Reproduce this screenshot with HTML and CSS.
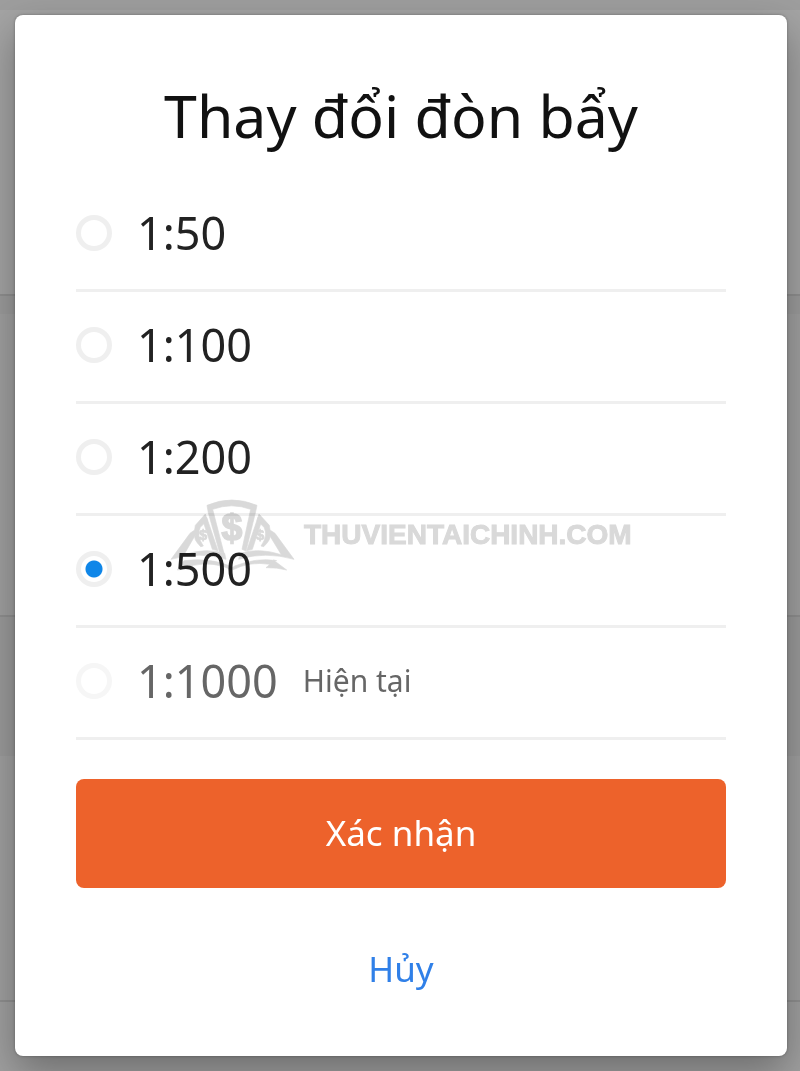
FILE: index.html
```
<!DOCTYPE html>
<html lang="vi">
<head>
    <meta charset="UTF-8">
    <meta name="viewport" content="width=device-width, initial-scale=1.0">
    <title>Thay đổi đòn bẩy</title>
    <link rel="stylesheet" href="styles.css">
</head>
<body>
<div class="backdrop">
    <div class="band band-top"></div>
    <div class="band band-head"></div>
    <div class="band band-line"></div>
    <div class="band band-gap"></div>
    <div class="band band-panel"></div>
    <div class="band band-line"></div>
    <div class="band band-middle"></div>
    <div class="band band-body"></div>
    <div class="band band-line"></div>
    <div class="band band-foot"></div>
</div>
<form class="modal">
    <h1>Thay đổi đòn bẩy</h1>
    <div class="options">
        <label class="option">
            <input type="radio" name="leverage" value="50">
            <span>1:50</span>
        </label>
        <label class="option">
            <input type="radio" name="leverage" value="100">
            <span>1:100</span>
        </label>
        <label class="option">
            <input type="radio" name="leverage" value="200">
            <span>1:200</span>
        </label>
        <label class="option">
            <input type="radio" name="leverage" value="500" checked>
            <span>1:500</span>
        </label>
        <label class="option current">
            <input type="radio" name="leverage" value="1000" disabled>
            <span>1:1000</span>
            <small>Hiện tại</small>
        </label>
        <div class="watermark">
            <svg viewBox="30 27 375 216" width="125" height="72" aria-hidden="true">
                <!-- middle note -->
                <path d="M141 46Q215 14 291 46L286 69L258 183L246 178L272 58Q215 37 158 58L192 190L178 185L145 69Z"/>
                <!-- side notes -->
                <path d="M136 72L142 91L121 112Q108 136 130 168L122 170Q98 146 106 135L72 194Q140 172 194 190L198 208Q120 183 33 208L90 130L104 120L106 106Z"/>
                <path d="M297 72L291 91L312 112Q325 136 303 168L311 170Q336 146 328 135L364 194Q295 172 240 190L236 208Q315 183 402 208L345 130L330 120L328 106Z"/>
                <path d="M140 82L174 182L157 178L130 96Z"/>
                <path d="M294 82L260 182L277 178L304 96Z"/>
                <!-- open book -->
                <path d="M72 212Q150 202 210 228L217 233L224 228Q290 202 350 212L340 210L380 240Q350 232 318 233L330 223Q270 213 217 240Q160 213 100 226L85 235L52 240Z"/>
                <text class="sign big" x="216" y="151">$</text>
                <text class="sign" x="129" y="150">$</text>
                <text class="sign" x="300" y="150">$</text>
            </svg>
            <span>THUVIENTAICHINH.COM</span>
        </div>
    </div>
    <button type="submit" class="confirm">Xác nhận</button>
    <button type="button" class="cancel">Hủy</button>
</form>
</body>
</html>
```

FILE: styles.css
```
* {
    box-sizing: border-box;
}
body {
    display: grid;
    min-height: 100vh;
    margin: 0;
    overflow: hidden;
    font-family: "Noto Sans", "Open Sans", sans-serif;
}
.backdrop, .modal {
    grid-area: 1 / 1;
}
.backdrop {
    display: flex;
    flex-direction: column;
    background-color: #a0a0a0;
}
.band-top {
    flex: 10;
    background-color: #9e9e9e;
}
.band-head {
    flex: 284;
    background-color: #a4a4a4;
}
.band-line {
    height: 2px;
    background-color: #909090;
}
.band-gap {
    flex: 18;
    background-color: #9c9c9c;
}
.band-panel {
    flex: 300;
}
.band-middle {
    flex: 139;
    background-color: #9b9b9b;
}
.band-body {
    flex: 244;
}
.band-foot {
    flex: 70;
}
.modal {
    margin: 15px 13px 16px 15px;
    padding: 58px 61px 56px;
    border-radius: 8px;
    background-color: #fff;
    box-shadow: 0 16px 40px rgba(0, 0, 0, 0.32), 0 0 3px rgba(0, 0, 0, 0.3);
}
h1 {
    margin: 0 0 22px;
    font-size: 59px;
    font-weight: 400;
    line-height: 85px;
    text-align: center;
    color: #111;
}
.options {
    position: relative;
}
.option {
    display: flex;
    align-items: center;
    height: 112px;
    padding-bottom: 4px;
    border-bottom: 3px solid #efefef;
    font-size: 45px;
    color: #222;
}
.option input {
    appearance: none;
    width: 36px;
    height: 36px;
    margin: 0 25px 0 0;
    border: 5px solid #efefef;
    border-radius: 50%;
}
.option input:checked {
    background: radial-gradient(circle, #0f86e8 8px, #fff 9px);
}
.option small {
    margin-left: 25px;
    font-size: 30px;
}
.current {
    color: #666;
}
.current input {
    border-color: #f6f6f6;
}
.watermark {
    position: absolute;
    top: 319px;
    left: 94px;
    display: flex;
    align-items: center;
    gap: 9px;
    color: #d9d9d9;
    font-family: "Liberation Sans", sans-serif;
    font-size: 28px;
    font-weight: 700;
    -webkit-text-stroke: 1px #d9d9d9;
    mix-blend-mode: multiply;
    pointer-events: none;
}
.watermark svg {
    fill: currentColor;
    stroke: currentColor;
    stroke-width: 2px;
}
.sign {
    font-size: 44px;
    text-anchor: middle;
}
.sign.big {
    font-size: 112px;
    stroke-width: 5px;
}
.confirm, .cancel {
    display: block;
    width: 100%;
    padding: 0 0 3px;
    border: 0;
    border-radius: 8px;
    font-family: inherit;
    font-size: 35px;
    cursor: pointer;
}
.confirm {
    height: 109px;
    margin-top: 39px;
    background-color: #ed622b;
    color: #fff;
}
.cancel {
    height: 60px;
    margin-top: 52px;
    background-color: transparent;
    color: #3080e8;
}
```
